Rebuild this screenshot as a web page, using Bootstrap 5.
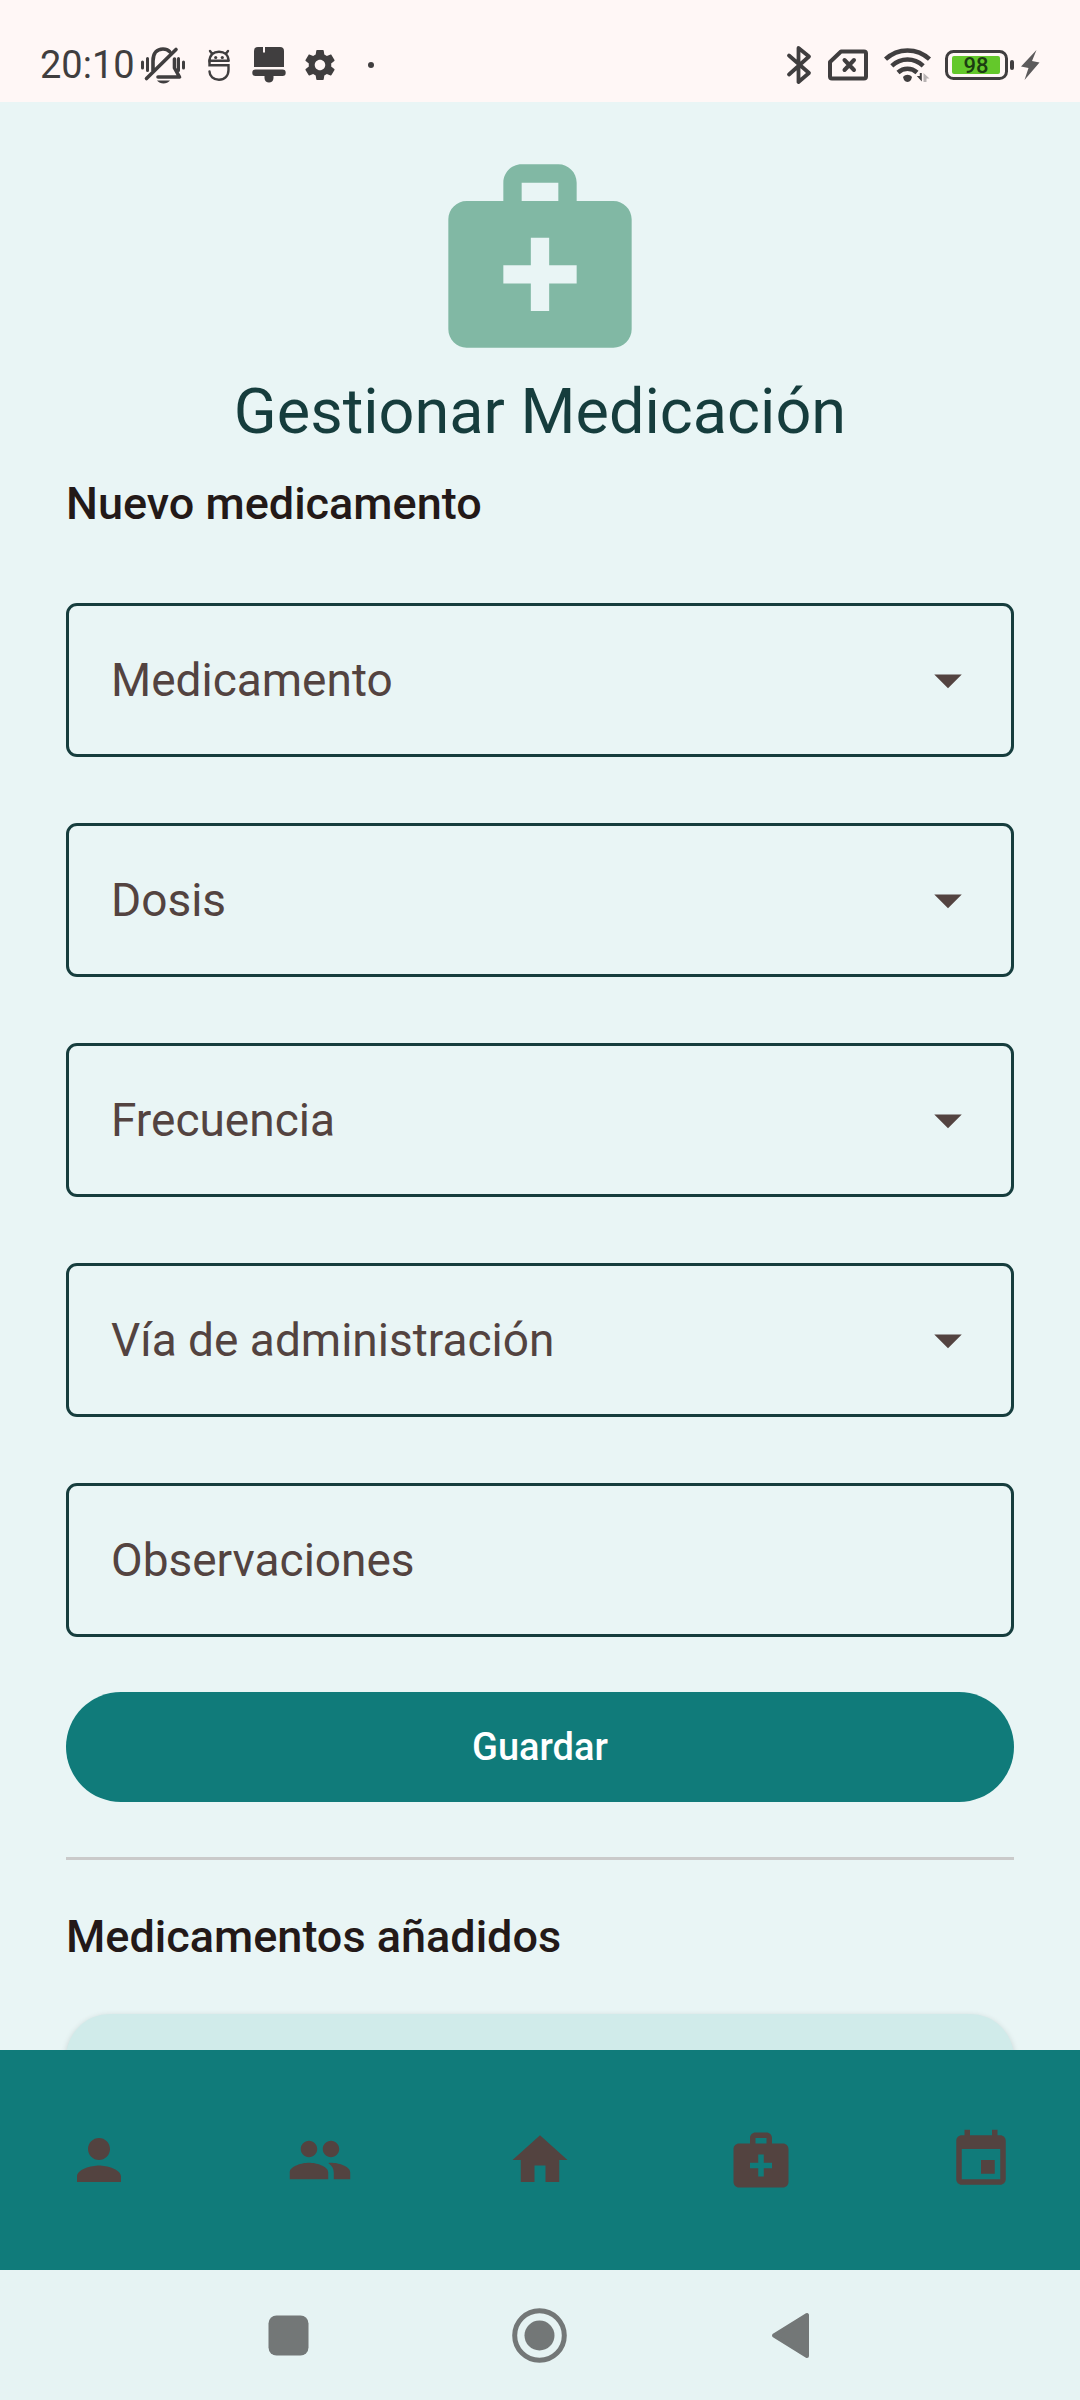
<!DOCTYPE html>
<html lang="es">
<head>
<meta charset="utf-8">
<meta name="viewport" content="width=device-width, initial-scale=1">
<title>Gestionar Medicación</title>
<link href="https://cdn.jsdelivr.net/npm/bootstrap@5.3.0/dist/css/bootstrap.min.css" rel="stylesheet">
<style>
  :root { --teal: #107b7a; --ink: #163d3d; --brown: #534340; --mint: #e9f5f5; }
  body { font-family: Roboto, "Noto Sans", sans-serif; background: var(--mint); color: #231918; }
  svg { display: block; flex: none; }

  .status-bar { background: #fff7f6; color: #403e3f; height: 102px; padding: 28px 40px 0 40px; }
  .clock { font-size: 38px; line-height: 44px; margin-right: 5px; }

  .screen-main { flex: 1 1 0; min-height: 0; padding: 44px 66px 0; }
  .hero-icon { color: #81b8a4; margin-bottom: 6px; }
  .screen-title { font-size: 63px; line-height: 80px; font-weight: 400; color: var(--ink); }
  .section-title { font-size: 45px; line-height: 66px; font-weight: 500; }
  .form-title { margin: 19px 0 66px; }

  .field-stack { gap: 66px; }
  .field-wrap > * { grid-area: 1 / 1; }
  .field-wrap label { z-index: 1; align-self: center; padding: 0 45px; pointer-events: none; }
  .field-wrap { color: var(--brown); font-size: 46px; line-height: 66px; }
  .field-wrap .field-box {
    height: 154px; padding: 0 42px; border: 3px solid var(--ink); border-radius: 11px;
    background-color: transparent; color: inherit; font-size: 46px; line-height: 66px;
  }
  .field-wrap select.field-box {
    background-image: url("data:image/svg+xml,%3Csvg xmlns='http://www.w3.org/2000/svg' viewBox='0 0 24 24'%3E%3Cpath fill='%23534340' d='M7 10l5 5 5-5z'/%3E%3C/svg%3E");
    background-size: 66px 66px; background-position: right 30px center;
  }

  .save-btn, .save-btn:hover { background: var(--teal); color: #fff; }
  .save-btn { height: 110px; margin-top: 55px; font-size: 38px; line-height: 56px; font-weight: 500; border: 0; }
  .divider { height: 3px; margin: 55px 0 44px; border: 0; background: #cacaca; opacity: 1; }
  .med-card { height: 300px; margin-top: 44px; border: 0; border-radius: 44px; background: #d0ebea; box-shadow: 0 2px 6px rgba(0, 0, 0, .16); }

  .app-nav { background: var(--teal); height: 220px; padding: 0 66px; }
  .app-nav a { color: var(--brown); }
  .system-nav { background: #e6f3f3; height: 130px; gap: 196px; padding-right: 2px; color: #737777; }
  .system-nav button { color: inherit; }
</style>
</head>
<body>
<div class="d-flex flex-column vh-100 overflow-hidden">

  <header class="status-bar d-flex align-items-center justify-content-between">
    <div class="d-flex align-items-center">
      <span class="clock">20:10</span>
      <svg width="48" height="40" viewBox="0 0 48 40" fill="none" stroke="currentColor" stroke-width="3.6" stroke-linecap="round" aria-hidden="true">
        <path d="M2.500 17v6M7.500 13.500v12M43.500 17v6M38.500 13.500v12" stroke-width="3"/>
        <path d="M13 26V16C13 8 17 4 23 4c2.500 0 5 .8 6.500 2.500M6.500 33.500L36 4.500"/>
        <path d="M34.500 14v9l5 9H18" stroke-linejoin="round"/>
        <path d="M17 35.500h13c-3 4-10 4-13 0z" fill="currentColor" stroke="none"/>
      </svg>
      <svg class="ms-3" width="31" height="34" viewBox="0 0 31 34" fill="none" stroke="currentColor" stroke-width="2.400" stroke-linecap="round" aria-hidden="true">
        <path d="M5.500 13.500C5.500 7 9.500 3.800 15 3.800S24.500 7 24.500 12.500M7.500 5L6 3M22.500 5L24 3"/>
        <path d="M24.500 12.800H5.500v4.500h19V22c0 6-4 9.800-9.500 9.800S5.500 28 5.500 23.500"/>
        <circle cx="11.700" cy="9.500" r="1.600" fill="currentColor" stroke="none"/><circle cx="18.300" cy="9.500" r="1.600" fill="currentColor" stroke="none"/>
      </svg>
      <svg class="ms-3" width="35" height="38" viewBox="0 0 35 38" fill="currentColor" aria-hidden="true">
        <path d="M7 1h5v5.500h2V1h15a4 4 0 0 1 4 4v16H3V5a4 4 0 0 1 4-4z"/>
        <path d="M4.500 23.500h27a3.200 3.200 0 0 1 0 6.400H22.500V32c0 6-9 6-9 0v-2.100h-9a3.200 3.200 0 0 1 0-6.400z"/>
      </svg>
      <svg class="ms-3" width="36" height="36" viewBox="0 0 24 24" fill="currentColor" aria-hidden="true">
        <path d="M19.430 12.980c.04-.32.07-.64.07-.98s-.03-.66-.07-.98l2.110-1.650c.19-.15.24-.42.12-.64l-2-3.460c-.12-.22-.39-.3-.61-.22l-2.490 1c-.52-.4-1.080-.73-1.690-.98l-.38-2.650C14.460 2.180 14.250 2 14 2h-4c-.25 0-.46.18-.49.42l-.38 2.650c-.61.25-1.170.59-1.690.98l-2.490-1c-.23-.09-.49 0-.61.22l-2 3.460c-.13.22-.07.49.12.64l2.110 1.650c-.04.32-.07.65-.07.98s.03.66.07.98l-2.110 1.650c-.19.15-.24.42-.12.64l2 3.460c.12.22.39.3.61.22l2.490-1c.52.4 1.080.73 1.690.98l.38 2.650c.03.24.24.42.49.42h4c.25 0 .46-.18.49-.42l.38-2.650c.61-.25 1.170-.59 1.690-.98l2.490 1c.23.09.49 0 .61-.22l2-3.460c.12-.22.07-.49-.12-.64l-2.110-1.650zM12 15.500c-1.930 0-3.500-1.570-3.500-3.500s1.570-3.500 3.500-3.500 3.500 1.570 3.500 3.500-1.570 3.500-3.500 3.500z"/>
      </svg>
      <svg class="ms-4" width="18" height="8" viewBox="0 0 18 8" fill="currentColor" aria-hidden="true"><circle cx="9" cy="4" r="3"/></svg>
    </div>
    <div class="d-flex align-items-center">
      <svg width="26" height="40" viewBox="0 0 26 40" fill="none" stroke="currentColor" stroke-width="3.800" stroke-linecap="round" stroke-linejoin="round" aria-hidden="true">
        <path d="M3 10.500L23 28 12.500 37V3L23 11.500 3 29.500"/>
      </svg>
      <svg class="ms-3" width="40" height="32" viewBox="0 0 40 32" fill="none" stroke="currentColor" stroke-width="4" stroke-linejoin="round" stroke-linecap="round" aria-hidden="true">
        <path d="M13 2.500H36a2 2 0 0 1 2 2V27.500a2 2 0 0 1-2 2H4a2 2 0 0 1-2-2V13z"/><path d="M16.500 11l9.500 10M26 11l-9.500 10"/>
      </svg>
      <svg class="ms-3" width="48" height="38" viewBox="0 0 48 38" fill="none" stroke="currentColor" stroke-width="4.500" aria-hidden="true">
        <path d="M1.500 13.200C14 1.500 33 1.500 45.500 13.200M7.800 19.800C17 11.500 30 11.500 39.200 19.800M14 26.500C19.500 21.500 27.500 21.500 33 26.500"/>
        <path d="M19 31c2.500-3 6.500-3 9 0l-1 3c-2 2.500-5 2.500-7 0z" fill="currentColor" stroke="none"/>
        <path d="M37.800 27v8.500l-5-5.500h3v-3z" fill="currentColor" stroke="none"/><path d="M39.500 36v-9l6 5.500h-3V36z" fill="#b9b4b4" stroke="none"/>
      </svg>
      <svg class="ms-2" width="76" height="34" viewBox="0 0 76 34" role="img" aria-label="98">
        <rect x="6.500" y="3.500" width="60" height="27" rx="7" fill="none" stroke="currentColor" stroke-width="3"/>
        <rect x="12" y="8" width="48" height="18" rx="2" fill="#64c82b"/>
        <rect x="70" y="12" width="4" height="10" rx="2" fill="currentColor"/>
        <text x="36" y="25" text-anchor="middle" font-family="Roboto, sans-serif" font-size="22" font-weight="500" fill="#1c3d12">98</text>
      </svg>
      <svg class="ms-1" width="20" height="32" viewBox="0 0 20 32" fill="#5c5a5b" aria-hidden="true"><path d="M16.500 1L1 17.500l7.500 1.500L4.500 31 19.500 13.500l-7.500-1.500z"/></svg>
    </div>
  </header>

  <main class="screen-main overflow-hidden">
    <svg class="hero-icon mx-auto" width="220" height="220" viewBox="0 0 24 24" fill="currentColor" aria-hidden="true">
      <path d="M20 6h-4V4c0-1.100-.9-2-2-2h-4c-1.100 0-2 .9-2 2v2H4c-1.100 0-2 .9-2 2v12c0 1.100.9 2 2 2h16c1.100 0 2-.9 2-2V8c0-1.100-.9-2-2-2zM10 4h4v2h-4V4zm6 11h-3v3h-2v-3H8v-2h3v-3h2v3h3v2z"/>
    </svg>
    <h1 class="screen-title text-center mb-0">Gestionar Medicación</h1>
    <h2 class="section-title form-title">Nuevo medicamento</h2>

    <form>
      <div class="field-stack d-flex flex-column">
        <div class="field-wrap d-grid">
          <label for="medicamento">Medicamento</label>
          <select class="form-select field-box" id="medicamento"><option value=""></option></select>
        </div>
        <div class="field-wrap d-grid">
          <label for="dosis">Dosis</label>
          <select class="form-select field-box" id="dosis"><option value=""></option></select>
        </div>
        <div class="field-wrap d-grid">
          <label for="frecuencia">Frecuencia</label>
          <select class="form-select field-box" id="frecuencia"><option value=""></option></select>
        </div>
        <div class="field-wrap d-grid">
          <label for="via">Vía de administración</label>
          <select class="form-select field-box" id="via"><option value=""></option></select>
        </div>
        <div class="field-wrap d-grid">
          <label for="observaciones">Observaciones</label>
          <input type="text" class="form-control field-box" id="observaciones">
        </div>
      </div>
      <button type="button" class="btn save-btn w-100 rounded-pill">Guardar</button>
    </form>

    <hr class="divider">
    <h2 class="section-title mb-0">Medicamentos añadidos</h2>
    <div class="card med-card"></div>
  </main>

  <nav class="app-nav d-flex align-items-center justify-content-between" aria-label="Principal">
    <a href="#" aria-label="Perfil"><svg width="66" height="66" viewBox="0 0 24 24" fill="currentColor"><path d="M12 12c2.210 0 4-1.790 4-4s-1.790-4-4-4-4 1.790-4 4 1.790 4 4 4zm0 2c-2.670 0-8 1.340-8 4v2h16v-2c0-2.660-5.330-4-8-4z"/></svg></a>
    <a href="#" aria-label="Personas"><svg width="66" height="66" viewBox="0 0 24 24" fill="currentColor"><path d="M16 11c1.660 0 2.990-1.340 2.990-3S17.660 5 16 5c-1.660 0-3 1.340-3 3s1.340 3 3 3zm-8 0c1.660 0 2.990-1.340 2.990-3S9.660 5 8 5C6.340 5 5 6.340 5 8s1.340 3 3 3zm0 2c-2.330 0-7 1.170-7 3.500V19h14v-2.500c0-2.330-4.670-3.500-7-3.500zm8 0c-.29 0-.62.02-.97.05 1.160.84 1.970 1.970 1.970 3.450V19h6v-2.500c0-2.330-4.670-3.500-7-3.500z"/></svg></a>
    <a href="#" aria-label="Inicio"><svg width="66" height="66" viewBox="0 0 24 24" fill="currentColor"><path d="M10 20v-6h4v6h5v-8h3L12 3 2 12h3v8z"/></svg></a>
    <a href="#" aria-label="Medicación"><svg width="66" height="66" viewBox="0 0 24 24" fill="currentColor"><path d="M20 6h-4V4c0-1.100-.9-2-2-2h-4c-1.100 0-2 .9-2 2v2H4c-1.100 0-2 .9-2 2v12c0 1.100.9 2 2 2h16c1.100 0 2-.9 2-2V8c0-1.100-.9-2-2-2zM10 4h4v2h-4V4zm6 11h-3v3h-2v-3H8v-2h3v-3h2v3h3v2z"/></svg></a>
    <a href="#" aria-label="Calendario"><svg width="66" height="66" viewBox="0 0 24 24" fill="currentColor"><path d="M17 12h-5v5h5v-5zM16 1v2H8V1H6v2H5c-1.110 0-1.990.9-1.990 2L3 19c0 1.100.89 2 2 2h14c1.100 0 2-.9 2-2V5c0-1.100-.9-2-2-2h-1V1h-2zm3 18H5V8h14v11z"/></svg></a>
  </nav>

  <footer class="system-nav d-flex align-items-center justify-content-center">
    <button type="button" class="btn p-0 border-0" aria-label="Recientes"><svg width="55" height="55" viewBox="0 0 55 55" fill="currentColor"><rect x="7.500" y="7.500" width="40" height="40" rx="8"/></svg></button>
    <button type="button" class="btn p-0 border-0" aria-label="Inicio del sistema"><svg width="55" height="55" viewBox="0 0 55 55"><circle cx="27.500" cy="27.500" r="24.800" fill="none" stroke="currentColor" stroke-width="5"/><circle cx="27.500" cy="27.500" r="15" fill="currentColor"/></svg></button>
    <button type="button" class="btn p-0 border-0" aria-label="Atrás"><svg width="55" height="55" viewBox="0 0 55 55" fill="currentColor" stroke="currentColor" stroke-width="4" stroke-linejoin="round"><path d="M44 7v41L11 27.500z"/></svg></button>
  </footer>
</div>
<script src="https://cdn.jsdelivr.net/npm/bootstrap@5.3.0/dist/js/bootstrap.bundle.min.js"></script>
</body>
</html>
